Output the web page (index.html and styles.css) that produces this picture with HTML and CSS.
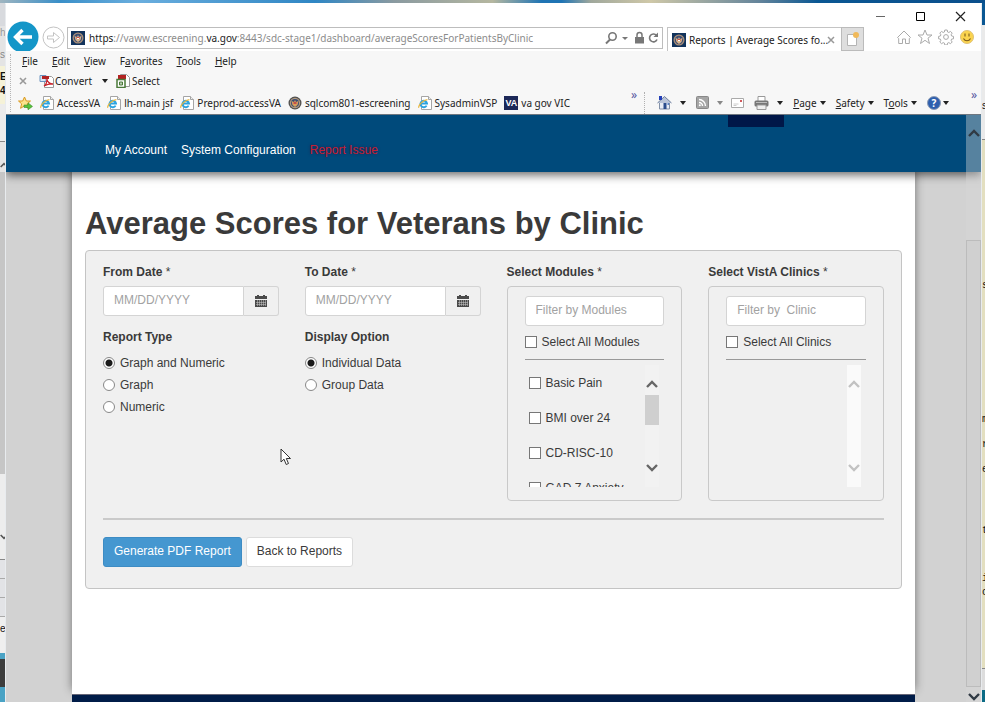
FILE: index.html
```html
<!DOCTYPE html>
<html lang="en">
<head>
<meta charset="utf-8">
<title>Reports | Average Scores for Veterans by Clinic</title>
<link rel="stylesheet" href="styles.css">
</head>
<body>
<svg class="defs" aria-hidden="true">
  <symbol id="seal" viewBox="0 0 14 14"><rect width="14" height="14" fill="#12335c"/><circle cx="7" cy="7" r="5.5" fill="#a98f78"/><circle cx="7" cy="7" r="4.2" fill="#3c4d73"/><path d="M3.5 5l2.5 1 1-2 1 2 2.500-1-1 4-2.500 2-2.500-2z" fill="#d9b58b"/><path d="M5.500 6h3v2h-3z" fill="#c6504a"/><path d="M6 7h2v1H6z" fill="#fff"/></symbol>
  <symbol id="seal-round" viewBox="0 0 14 14"><circle cx="7" cy="7" r="6.500" fill="#51504f"/><circle cx="7" cy="7" r="5.200" fill="#b29a80"/><circle cx="7" cy="7" r="4" fill="#3c4d73"/><path d="M3.500 5l2.500 1 1-2 1 2 2.500-1-1 4-2.500 2-2.500-2z" fill="#d9a05b"/><path d="M5.500 6h3v2h-3z" fill="#c6504a"/></symbol>
  <symbol id="iepage" viewBox="0 0 14 14"><path d="M3.500.5h7l3 3v10h-10z" fill="#fff" stroke="#a5a5a5"/><path d="M10.500.5v3h3" fill="#eee" stroke="#a5a5a5"/><path d="M8.600 9.600A3.300 3.300 0 1 1 9 7.500H3" fill="none" stroke="#2ba3e0" stroke-width="1.900"/><path d="M.8 11.800C0 9.500 5 3.700 9.400 3.600" fill="none" stroke="#e8b53a" stroke-width="1.200"/></symbol>
  <symbol id="cal" viewBox="0 0 12 12"><path d="M0 1h12v3H0zM2 0h2v2H2zM8 0h2v2H8zM0 5h12v7H0z" fill="#4a4a4a"/><path d="M2.500 5v6M4.500 5v6M6.500 5v6M8.500 5v6M10.500 5v6M1 7.500h10M1 9.500h10" stroke="#ccc" stroke-width=".5"/></symbol>
  <symbol id="up" viewBox="0 0 12 8"><path d="M1 7L6 2L11 7" fill="none" stroke="currentColor" stroke-width="2.400"/></symbol>
  <symbol id="down" viewBox="0 0 12 8"><path d="M1 1L6 6L11 1" fill="none" stroke="currentColor" stroke-width="2.400"/></symbol>
</svg>

<div class="desktop">
  <aside class="behind behind-left" aria-hidden="true">
    <div class="l1"></div><div class="l2">h</div><div class="l3">s</div><div class="l4">EI<br>4'</div><div class="l5"></div><div class="l6"><svg width="8" height="6"><use href="#up"/></svg></div><div class="l7"></div><div class="l8"><svg width="8" height="6"><use href="#down"/></svg></div><div class="l9"></div><div class="l10"></div><div class="l11"></div><div class="l12">er</div><div class="l13"></div>
  </aside>

  <div class="window">
    <div class="titlebar">
      <button aria-label="Minimize"><svg width="11" height="11"><path d="M1 5.500h9" stroke="#666"/></svg></button>
      <button aria-label="Maximize"><svg width="11" height="11"><path d="M1.500 1.500h8v8h-8z" fill="none" stroke="#000"/></svg></button>
      <button aria-label="Close"><svg width="11" height="11"><path d="M1 1l9 9M10 1l-9 9" stroke="#222" stroke-width="1.200"/></svg></button>
    </div>
    <div class="address-row">
      <button class="back" aria-label="Back"><svg width="32" height="30" viewBox="0 0 32 30"><circle cx="16" cy="16" r="15.500" fill="#1496c8"/><path d="M25 16H9M15.500 9L8.500 16l7 7" fill="none" stroke="#fff" stroke-width="3.400"/></svg></button>
      <button class="forward" aria-label="Forward"><svg width="23" height="23" viewBox="0 0 23 23"><circle cx="11.500" cy="11.500" r="10.500" fill="#fff" stroke="#c3c3c3"/><path d="M5.500 10h6V6.500l6 5-6 5V13h-6z" fill="#fff" stroke="#c3c3c3"/></svg></button>
      <div class="address">
        <svg width="14" height="14"><use href="#seal"/></svg>
        <span class="url"><b>https</b>://vaww.escreening.<b>va.gov</b>:8443/sdc-stage1/dashboard/averageScoresForPatientsByClinic</span>
        <svg class="addr-icons" width="54" height="14" viewBox="0 0 54 14"><circle cx="7.500" cy="5.500" r="3.700" fill="none" stroke="#777" stroke-width="1.600"/><path d="M5 8.500L1 12.500" stroke="#777" stroke-width="2"/><path d="M17 6h6l-3 3z" fill="#777"/><path d="M30 6h9v6.500h-9z" fill="#777"/><path d="M32 6V4a2.500 2.500 0 0 1 5 0v2" fill="none" stroke="#777" stroke-width="1.500"/><path d="M51.500 4.500A3.900 3.900 0 1 0 52 8.500" fill="none" stroke="#777" stroke-width="1.600"/><path d="M53 1.500v4.500h-4.500z" fill="#777"/></svg>
      </div>
      <div class="tab"><svg width="14" height="14"><use href="#seal"/></svg><span>Reports | Average Scores fo...</span><button aria-label="Close tab"><svg width="8" height="8"><path d="M1 1l6 6M7 1l-6 6" stroke="#999" stroke-width="1.500"/></svg></button></div>
      <button class="newtab" aria-label="New tab"><svg width="14" height="16" viewBox="0 0 14 16"><path d="M1.500 3.500h9v11h-9z" fill="#fff" stroke="#b4b4b4"/><circle cx="10" cy="4" r="3" fill="#f0b95a"/></svg></button>
      <div class="shell-icons">
        <svg width="16" height="16" viewBox="0 0 16 16"><path d="M1.500 8.500L8 2l6.500 6.500-1.200 1V14.500H9.500V10h-3v4.500H2.700V9.500z" fill="none" stroke="#aaa"/></svg>
        <svg width="16" height="16" viewBox="0 0 16 16"><path d="M8 1l2 5h5l-4 3.200 1.500 5.300L8 11.300l-4.500 3.200L5 9.200 1 6h5z" fill="none" stroke="#aaa"/></svg>
        <svg width="16" height="16" viewBox="0 0 16 16"><circle cx="8" cy="8" r="2.400" fill="none" stroke="#aaa"/><path d="M6.800 1h2.400l.4 2 1.200.5 1.700-1.100 1.700 1.700-1.100 1.700.5 1.200 1.900.4v2.400l-1.900.3-.5 1.200 1.100 1.700-1.700 1.700-1.700-1.100-1.200.5-.4 1.900H6.800l-.4-1.900-1.200-.5-1.700 1.100L1.800 13l1.100-1.700-.5-1.200L.6 9.800V7.400L2.400 7l.5-1.200-1.100-1.700 1.700-1.700 1.700 1.100L6.400 3z" fill="none" stroke="#aaa"/></svg>
        <svg width="16" height="16" viewBox="0 0 16 16"><circle cx="8" cy="8" r="6.500" fill="#fbd44e" stroke="#dfc277"/><path d="M6 4.500v3M10 4.500v3M4.500 9.500c1.500 3 5.500 3 7 0" fill="none" stroke="#7b5b1c" stroke-width="1.100"/></svg>
      </div>
    </div>

    <div class="toolbars">
      <nav class="menu-row" aria-label="Browser menu"><a href="#"><u>F</u>ile</a><a href="#"><u>E</u>dit</a><a href="#"><u>V</u>iew</a><a href="#">F<u>a</u>vorites</a><a href="#"><u>T</u>ools</a><a href="#"><u>H</u>elp</a></nav>
      <div class="convert-row">
        <svg width="8" height="8"><path d="M1 1l6 6M7 1l-6 6" stroke="#999" stroke-width="1.600"/></svg>
        <button class="convert"><svg width="15" height="14" viewBox="0 0 15 14"><path d="M5.500 2.500h7l2 2v9h-9z" fill="#fff" stroke="#999"/><path d="M1 1.500h6v6H1z" fill="#d8e6f4" stroke="#6a93bf"/><path d="M3 2h7v3H3z" fill="#b22222"/><path d="M5 12c3-2 3-5 3-7 0 3 3 5 6 5-4-.5-6 .5-9 2z" fill="none" stroke="#c9252d" stroke-width="1.300"/></svg>Convert<i class="caret"></i></button>
        <button class="select"><svg width="14" height="14" viewBox="0 0 14 14"><path d="M4.500.5h6l3 3v9h-9z" fill="#fff" stroke="#999"/><path d="M2 1h8v4H2z" fill="#b22222"/><path d="M1 5.500h8v8H1z" fill="#fff" stroke="#4a7a3a" stroke-width="1.500"/><path d="M3.500 8h3v3h-3z" fill="#b5cdae" stroke="#4a7a3a"/></svg>Select</button>
      </div>
      <div class="links-row">
        <div class="links">
          <svg width="15" height="14" viewBox="0 0 15 14"><path d="M6.500 1l1.800 4h4.200L9.300 7.800l1 4.500-3.800-2.500-3.900 2.500 1-4.500L.5 5h4.200z" fill="#fce38b" stroke="#d9981e"/><path d="M6 9h4V6.800l4.500 3.600L10 13.800V11.500H6z" fill="#57c23d" stroke="#3c8f29" stroke-width=".6"/></svg>
          <a href="#"><svg width="14" height="14"><use href="#iepage"/></svg>AccessVA</a>
          <a href="#"><svg width="14" height="14"><use href="#iepage"/></svg>lh-main jsf</a>
          <a href="#"><svg width="14" height="14"><use href="#iepage"/></svg>Preprod-accessVA</a>
          <a href="#"><svg width="14" height="14"><use href="#seal-round"/></svg>sqlcom801-escreening</a>
          <a href="#"><svg width="14" height="14"><use href="#iepage"/></svg>SysadminVSP</a>
          <a href="#"><span class="va-mark">VA</span>va gov VIC</a>
        </div>
        <span class="more">»</span>
        <div class="commands">
          <svg width="15" height="15" viewBox="0 0 15 15"><path d="M2.500 7v7h10V7" fill="#e8edf5" stroke="#8290a8"/><path d="M.5 8L7.500 1.500 14.500 8" fill="#b9c4d8" stroke="#71809c"/><path d="M2 1h3v4H2z" fill="#2440b8"/><path d="M6.500 8h3v6h-3z" fill="#2b4d8c"/><path d="M10.500 8h1.500v2h-1.500z" fill="#5c84c4"/></svg><i class="caret wide"></i>
          <svg width="13" height="13" viewBox="0 0 13 13"><rect x=".5" y=".5" width="12" height="12" rx="1" fill="#a5a5a5" stroke="#888"/><path d="M3 6.500a3.500 3.500 0 0 1 3.500 3.500M3 3.500A6.500 6.500 0 0 1 9.500 10" fill="none" stroke="#fff" stroke-width="1.400"/><circle cx="3.800" cy="9.300" r="1" fill="#fff"/></svg><i class="caret wide dim"></i>
          <svg class="mail" width="13" height="10" viewBox="0 0 13 10"><path d="M.5.500h12v9H.5z" fill="#fff" stroke="#aaa"/><path d="M9 2h2v2H9z" fill="#d2595c"/><path d="M2.500 6h5M2.500 7.500h3" stroke="#ccc"/></svg>
          <svg width="15" height="14" viewBox="0 0 15 14"><path d="M4 .500h7v5H4z" fill="#fff" stroke="#999"/><rect x=".5" y="4.500" width="14" height="6" rx="1.500" fill="#777"/><path d="M3 9h9v4.500H3z" fill="#eee" stroke="#999"/><path d="M2 6.500h11" stroke="#bbb"/></svg><i class="caret wide"></i>
          <button><span><u>P</u>age</span><i class="caret"></i></button>
          <button><span><u>S</u>afety</span><i class="caret"></i></button>
          <button><span>T<u>o</u>ols</span><i class="caret"></i></button>
          <button class="help" aria-label="Help"><span class="help-dot">?</span><i class="caret"></i></button>
        </div>
        <span class="more end">»</span>
      </div>
    </div>

    <div class="viewport">
      <header class="site-nav">
        <div class="logo-tail"></div>
        <nav aria-label="Site"><a href="#">My Account</a><a href="#">System Configuration</a><a href="#" class="issue">Report Issue</a></nav>
      </header>
      <main>
        <h1>Average Scores for Veterans by Clinic</h1>
        <form class="panel">
          <div class="columns">
            <div>
              <label class="heading" for="from">From Date <span>*</span></label>
              <div class="date"><input id="from" type="text" placeholder="MM/DD/YYYY"><button type="button" aria-label="Pick from date"><svg width="12" height="12"><use href="#cal"/></svg></button></div>
              <div class="heading second" id="rt">Report Type</div>
              <div class="options" role="radiogroup" aria-labelledby="rt">
                <label><input type="radio" name="type" checked>Graph and Numeric</label>
                <label><input type="radio" name="type">Graph</label>
                <label><input type="radio" name="type">Numeric</label>
              </div>
            </div>
            <div>
              <label class="heading" for="to">To Date <span>*</span></label>
              <div class="date"><input id="to" type="text" placeholder="MM/DD/YYYY"><button type="button" aria-label="Pick to date"><svg width="12" height="12"><use href="#cal"/></svg></button></div>
              <div class="heading second" id="do">Display Option</div>
              <div class="options" role="radiogroup" aria-labelledby="do">
                <label><input type="radio" name="display" checked>Individual Data</label>
                <label><input type="radio" name="display">Group Data</label>
              </div>
            </div>
            <div>
              <label class="heading" for="modules">Select Modules <span>*</span></label>
              <div class="picker">
                <input id="modules" type="text" placeholder="Filter by Modules">
                <label class="all"><input type="checkbox">Select All Modules</label>
                <div class="list">
                  <div class="items">
                    <label><input type="checkbox">Basic Pain</label>
                    <label><input type="checkbox">BMI over 24</label>
                    <label><input type="checkbox">CD-RISC-10</label>
                    <label><input type="checkbox">GAD 7 Anxiety</label>
                  </div>
                  <div class="bar"><svg width="12" height="8"><use href="#up"/></svg><div class="track"><div class="thumb"></div></div><svg width="12" height="8"><use href="#down"/></svg></div>
                </div>
              </div>
            </div>
            <div>
              <label class="heading" for="clinics">Select VistA Clinics <span>*</span></label>
              <div class="picker">
                <input id="clinics" type="text" placeholder="Filter by  Clinic">
                <label class="all"><input type="checkbox">Select All Clinics</label>
                <div class="list">
                  <div class="items"></div>
                  <div class="bar disabled"><svg width="12" height="8"><use href="#up"/></svg><div class="track"></div><svg width="12" height="8"><use href="#down"/></svg></div>
                </div>
              </div>
            </div>
          </div>
          <div class="actions"><button type="button" class="btn primary">Generate PDF Report</button><button type="button" class="btn">Back to Reports</button></div>
        </form>
      </main>
      <footer></footer>
      <div class="page-bar"><svg width="12" height="8"><use href="#up"/></svg><div class="page-thumb"></div><svg width="12" height="8"><use href="#down"/></svg></div>
      <svg class="cursor" width="12" height="18" viewBox="0 0 12 18"><path d="M1 1v13l3-2.800 2.200 5.300 2.300-1-2.200-5H10.500z" fill="#fff" stroke="#333"/></svg>
    </div>
  </div>

  <aside class="behind behind-right" aria-hidden="true">
    <div class="r1"></div><div class="r2">s</div><div class="r3"><span>s</span><span>m</span><span>r</span><span>e</span><span>t</span><span>i</span><span>c</span></div><div class="r4"></div><div class="r5"></div>
  </aside>
</div>
</body>
</html>
```
FILE: styles.css
```css
* { box-sizing: border-box; }
body { margin: 0; font-family: "Liberation Sans", Arial, sans-serif; font-size: 12px; color: #3a3a3a; }
svg { display: block; flex: none; }
button { border: 0; padding: 0; background: none; font: inherit; color: inherit; display: flex; align-items: center; }
a { color: inherit; text-decoration: none; }
input { margin: 0; font: inherit; color: inherit; }
.defs { position: absolute; width: 0; height: 0; }

/* Desktop and the windows showing at its edges */
.desktop {
  height: 100vh; padding-top: 3px; display: grid; grid-template-columns: 5px minmax(0, 1fr) 3px; grid-template-rows: minmax(0, 1fr); overflow: hidden;
  background: linear-gradient(90deg, #9fb5c0 0, #3a8fc8 6%, #6aaede 14%, #2f86c4 32%, #8a9aa0 40%, #b5b7a0 50%, #1f74b4 55%, #1f74b4 57%, #a0a89c 60%, #cfc8a8 66%, #65859b 77%, #0a5793 83%, #0a4f8c 100%);
}
.behind { display: flex; flex-direction: column; overflow: hidden; font-size: 10px; line-height: 14px; color: #111; background: #e4e4e4; }
.behind > div { flex: none; overflow: hidden; }
.l1 { height: 23px; background: #d8dade; }
.l2 { height: 22px; color: #999; }
.l3 { height: 18px; color: #888; }
.l4 { height: 38px; padding-top: 4px; background: #f5f2d8; font-weight: bold; }
.l5 { height: 38px; background: #ececec; border-bottom: 1px solid #888; }
.l6 { height: 30px; padding-top: 20px; color: #555; }
.l7 { height: 302px; background: #c6c6c6; }
.l8 { height: 86px; padding-top: 60px; background: #ededed; color: #555; border-bottom: 1px solid #888; }
.l9, .l10, .l11 { height: 19px; border-bottom: 1px solid #aaa; background: #e2e3e6; }
.l12 { height: 36px; padding-top: 5px; background: #efefef; }
.l13 { flex: 1 0 0px !important; background: linear-gradient(#4aa3c5 0 6px, #3d3d3d 6px 34px, #4aa3c5 34px); }
.r1 { height: 22px; background: #0a5793; }
.r2 { height: 115px; padding-top: 74px; background: #eaeaea; border-bottom: 1px solid #888; }
.r3 { height: 528px; padding-top: 139px; background: #e3dfc0; font-family: "Liberation Mono", monospace; }
.r3 span { display: block; height: 14px; }
.r3 span:nth-child(1) { height: 134px; }
.r3 span:nth-child(2), .r3 span:nth-child(3) { height: 25px; }
.r3 span:nth-child(4) { height: 61px; }
.r3 span:nth-child(5) { height: 48px; }
.r4 { height: 22px; background: #ddd; border-top: 1px solid #888; }
.r5 { flex: 1 0 0px !important; background: #0b6b85; }

/* Browser frame */
.window { display: flex; flex-direction: column; background: #fff; border: 1px solid #e8ebee; border-top-color: #fff; border-bottom: 0; font-family: "Noto Sans", sans-serif; color: #222; }
.titlebar { height: 23px; display: flex; justify-content: flex-end; align-items: flex-end; gap: 29px; padding: 0 15px 5px 0; flex: none; }
.address-row { height: 24px; display: flex; align-items: flex-end; font-size: 10px; flex: none; }
.back { margin-left: 1px; }
.forward { margin: 0 2px 2px 3px; }
.address { flex: 1; min-width: 0; height: 22px; margin-bottom: 2px; padding: 0 3px; border: 1px solid #bdbdbd; display: flex; align-items: center; gap: 4px; color: #8c8c8c; }
.url { flex: 1; min-width: 0; overflow: hidden; white-space: nowrap; }
.url b { font-weight: normal; color: #222; }
.tab { width: 174px; height: 24px; margin-left: 4px; padding: 0 6px 0 4px; border: solid #c4c4c4; border-width: 1px 0 0 1px; display: flex; align-items: center; gap: 3px; white-space: nowrap; }
.tab span { flex: 1; min-width: 0; }
.newtab { width: 23px; height: 24px; justify-content: center; background: #dedede; border: 1px solid #bbb; }
.shell-icons { display: flex; gap: 5px; margin: 0 6px 6px 32px; }
.toolbars { background: #f7f7f7; font-size: 10px; border-bottom: 1px solid #6f7780; position: relative; flex: none; }
.toolbars::before { content: ""; position: absolute; left: 4px; top: 3px; bottom: 2px; border-left: 1px dotted #b5b5b5; }
.menu-row { height: 20px; display: flex; align-items: center; gap: 14px; padding-left: 16px; }
.convert-row { height: 20px; display: flex; align-items: center; padding-left: 13px; }
.convert { margin-left: 12px; gap: 1px; }
.convert .caret { margin-left: 9px; }
.select { margin-left: 8px; gap: 2px; }
.caret { flex: none; width: 0; height: 0; border: 3px solid transparent; border-top: 4px solid #222; border-bottom: 0; }
.caret.wide { margin: 0 10px 0 8px; }
.caret.dim { border-top-color: #888; margin-right: 8px; }
.links-row { height: 23px; display: flex; align-items: center; padding-left: 12px; white-space: nowrap; }
.links { flex: 1; min-width: 0; display: flex; align-items: center; gap: 7px; overflow: hidden; }
.links a { display: flex; align-items: center; gap: 3px; }
.va-mark { width: 14px; height: 14px; background: #1c2858; color: #fff; font: bold 9px/14px "Liberation Sans", sans-serif; text-align: center; }
.more { align-self: flex-start; font-size: 12px; line-height: 8px; color: #5555a0; }
.commands { height: 22px; margin-left: 7px; padding-left: 12px; display: flex; align-items: center; border-left: 1px dotted #b0b0b0; }
.mail { margin-right: 10px; }
.commands button { gap: 3px; margin-right: 10px; }
.commands .help { gap: 2px; margin-right: 0; }
.help-dot { width: 14px; height: 14px; border-radius: 50%; background: #2e5fae; border: 1px solid #8e9db5; color: #fff; font-weight: bold; line-height: 12px; text-align: center; }
.more.end { margin: 0 4px 0 22px; }

/* Page */
.viewport { flex: 1; min-height: 0; position: relative; overflow: hidden; display: flex; flex-direction: column; background: #d2d2d2; font-family: "Liberation Sans", Arial, sans-serif; color: #3a3a3a; }
.site-nav { flex: none; height: 57px; background: #004a7b; box-shadow: 0 3px 9px rgba(0, 0, 0, .6); z-index: 1; }
.logo-tail { width: 56px; height: 12px; margin: 0 197px 0 auto; background: #001748; }
.site-nav nav { display: flex; gap: 14px; padding: 15px 0 0 99px; line-height: 16px; color: #fff; }
.issue { color: #c81e32 !important; text-shadow: 0 0 3px #20204a; }
main { flex: 1; min-height: 0; margin: 0 66px; padding: 30px 13px 0; background: #fff; box-shadow: 0 -4px 9px rgba(0, 0, 0, .45); }
h1 { margin: 0; font-size: 31px; line-height: 44px; height: 48px; white-space: nowrap; }
.panel { padding: 13px 17px 21px; background: #f0f0f0; border: 1px solid #c4c4c4; border-radius: 4px; }
.columns { display: grid; grid-template-columns: repeat(4, minmax(0, 1fr)); gap: 26px; padding-bottom: 17px; border-bottom: 2px solid #cacaca; }
.heading { display: block; line-height: 16px; margin-bottom: 6px; font-weight: bold; white-space: nowrap; }
.heading span { font-weight: normal; }
.second { margin: 13px 0 7px; }
input[type="text"] { width: 100%; height: 30px; padding: 0 10px 2px; border: 1px solid #d4d4d4; border-radius: 3px; background: #fff; }
::placeholder { color: #a2a2a2; opacity: 1; }
.date { display: flex; }
.date input[type="text"] { flex: 1; min-width: 0; border-radius: 3px 0 0 3px; }
.date button { width: 35px; justify-content: center; border: 1px solid #d4d4d4; border-left: 0; border-radius: 0 3px 3px 0; }
.options label { display: flex; align-items: center; gap: 5px; height: 22px; }
input[type="radio"], input[type="checkbox"] { appearance: none; flex: none; width: 12px; height: 12px; border: 1px solid #777; background: #fff; }
input[type="radio"] { border-radius: 50%; border-color: #888; }
input[type="radio"]:checked { background: radial-gradient(circle, #1a1a1a 0 3px, #fff 4px); }
.picker { height: 215px; padding: 9px 17px 0; border: 1px solid #c9c9c9; border-radius: 4px; }
.all { display: flex; align-items: center; gap: 5px; height: 34px; padding-bottom: 1px; border-bottom: 1px solid #999; white-space: nowrap; }
.list { display: flex; height: 122px; margin: 5px 5px 0 4px; overflow: hidden; }
.items { flex: 1; min-width: 0; }
.items label { display: flex; align-items: center; gap: 5px; height: 35px; white-space: nowrap; }
.bar { width: 14px; padding: 15px 0; display: flex; flex-direction: column; align-items: center; color: #666; background: #f2f2f2; }
.bar.disabled { color: #c2c2c2; background: #fafafa; }
.track { flex: 1; width: 100%; padding-top: 7px; }
.thumb { height: 30px; background: #cfcfcf; }
.actions { display: flex; gap: 4px; padding-top: 17px; }
.btn { height: 30px; padding: 0 10px 2px; background: #fff; border: 1px solid #dcdcdc; border-radius: 3px; white-space: nowrap; }
.btn.primary { background: #4597d0; border-color: #3d8cc4; color: #fff; }
footer { flex: none; height: 8px; margin: 0 66px; background: #001c48; border-top: 1px solid #667; z-index: 1; }
.page-bar { position: absolute; z-index: 2; top: 0; right: 0; bottom: 0; width: 15px; display: flex; flex-direction: column; align-items: center; background: rgba(216, 216, 216, .4); color: #303a44; padding: 14px 0 1px; }
.page-thumb { flex: 1; width: 100%; margin: 103px 0 6px; border: 1px solid #bcbcbc; background: #d0d0d0; }
.cursor { position: absolute; left: 274px; top: 333px; }
```
